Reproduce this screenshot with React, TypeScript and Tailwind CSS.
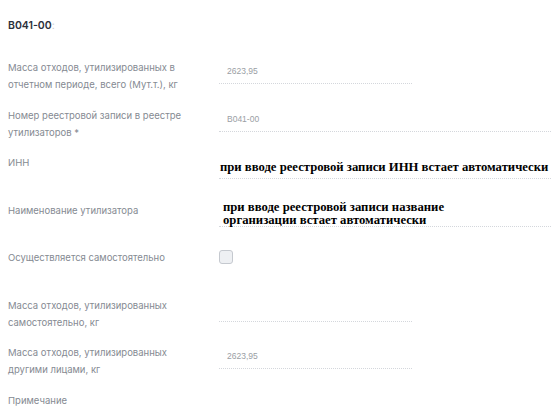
import React from "react";

interface Row {
  label: string[];
  value?: string;
  wide?: boolean;
  kind?: "text" | "serif" | "serif2" | "check";
}

const rows: Row[] = [
  { label: ["Масса отходов, утилизированных в", "отчетном периоде, всего (Мут.т.), кг"], value: "2623,95" },
  { label: ["Номер реестровой записи в реестре", "утилизаторов *"], value: "B041-00", wide: true },
  { label: ["ИНН"], kind: "serif", wide: true },
  { label: ["Наименование утилизатора"], kind: "serif2", wide: true },
  { label: ["Осуществляется самостоятельно"], kind: "check" },
  { label: ["Масса отходов, утилизированных", "самостоятельно, кг"] },
  { label: ["Масса отходов, утилизированных", "другими лицами, кг"], value: "2623,95" },
  { label: ["Примечание"], wide: true },
];

function Field({ row }: { row: Row }) {
  if (row.kind === "check") {
    return (
      <div className="h-[26px] pt-[2px]">
        <div className="w-[14px] h-[14px] rounded-[3px] border border-[#c5c9cf] bg-[#eef0f3]" />
      </div>
    );
  }

  const line = `h-[26px] border-b border-dotted border-[#d4d7dc] ${row.wide ? "w-[332px]" : "w-[193px]"}`;

  if (row.kind === "serif") {
    return (
      <div className={`${line} flex items-center pl-[1px] pt-[5px]`}>
        <span className="font-['Liberation_Serif',serif] font-bold text-[12.7px] text-black whitespace-nowrap">
          при вводе реестровой записи ИНН встает автоматически
        </span>
      </div>
    );
  }

  if (row.kind === "serif2") {
    return (
      <div className={`${line} relative`}>
        <div className="absolute left-[4px] bottom-[-1px] font-['Liberation_Serif',serif] font-bold text-[12.7px] leading-[13px] text-black whitespace-nowrap">
          <div>при вводе реестровой записи название</div>
          <div>организации встает автоматически</div>
        </div>
      </div>
    );
  }

  return (
    <div className={`${line} pl-2 pt-[7px]`}>
      <span className="block font-['Liberation_Sans',sans-serif] text-[8.5px] leading-[12px] text-[#9a9ea4]">{row.value}</span>
    </div>
  );
}

export default function App() {
  return (
    <div className="w-[551px] h-[416px] overflow-hidden bg-white font-['Inter',sans-serif]">
      <div className="h-[58px] pl-2 pt-[11px]">
        <span className="text-[10.5px] font-semibold text-[#2b303b]">B041-00</span>
        <span className="text-[10.5px] text-[#c8cbd0]">:</span>
      </div>
      {rows.map((row, i) => (
        <div key={i} className="h-[47.5px] flex">
          <div className="w-[219px] pl-2 pt-[1px] text-[9.5px] leading-[17px] text-[#858a92]">
            {row.label.map((l, j) => (
              <div key={j}>{l}</div>
            ))}
          </div>
          <Field row={row} />
        </div>
      ))}
    </div>
  );
}
